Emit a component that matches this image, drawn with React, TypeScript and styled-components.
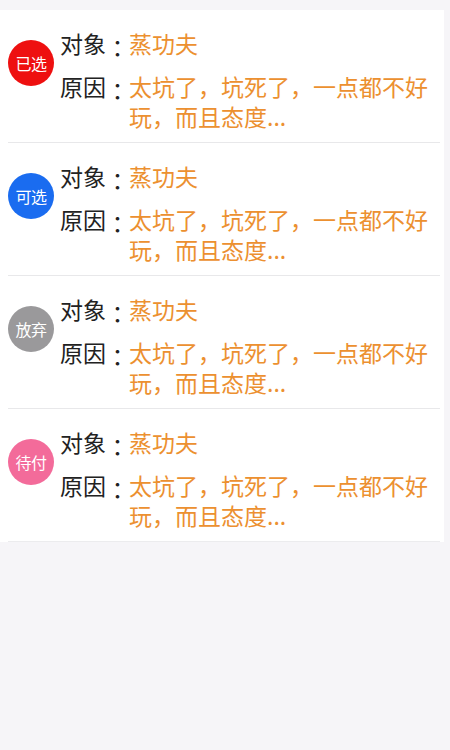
import React from "react";
import styled, { createGlobalStyle } from "styled-components";

const GlobalStyle = createGlobalStyle`
  html, body {
    margin: 0;
    padding: 0;
    background: #f6f5f8;
    font-family: "Noto Sans CJK SC", "Noto Sans", sans-serif;
  }
`;

type Status = { label: string; color: string };

const items: Status[] = [
  { label: "已选", color: "#ee1010" },
  { label: "可选", color: "#1a6cf0" },
  { label: "放弃", color: "#9a999b" },
  { label: "待付", color: "#f36b9a" },
];

const App: React.FC = () => {
  return (
    <>
      <GlobalStyle />
      <Page>
        <List>
          {items.map((s) => (
            <Item key={s.label}>
              <Badge $color={s.color}>{s.label}</Badge>
              <Info>
                <Line>
                  <Label>
                    对象<Colon>：</Colon>
                  </Label>
                  <Value>蒸功夫</Value>
                </Line>
                <Line>
                  <Label>
                    原因<Colon>：</Colon>
                  </Label>
                  <Value>太坑了，坑死了，一点都不好玩，而且态度...</Value>
                </Line>
              </Info>
            </Item>
          ))}
        </List>
      </Page>
    </>
  );
};
export default App;

const Page = styled.div`
  padding-top: 10px;
  min-height: 740px;
`;

const List = styled.div`
  width: 444px;
  background: #fff;
`;

const Item = styled.div`
  display: flex;
  align-items: flex-start;
  margin: 0 4px 0 8px;
  padding: 18px 0 12px;
  height: 102px;
  border-bottom: 1px solid #e8e8ea;
  &:last-child {
    border-bottom-color: #ececee;
  }
`;

const Badge = styled.div<{ $color: string }>`
  flex: none;
  width: 46px;
  height: 46px;
  margin-top: 12px;
  border-radius: 50%;
  background: ${(p) => p.$color};
  color: #fff;
  font-size: 16px;
  line-height: 46px;
  text-align: center;
  letter-spacing: -0.5px;
`;

const Info = styled.div`
  flex: 1;
  display: flex;
  flex-direction: column;
  gap: 13px;
  margin-left: 6px;
  font-size: 23px;
  line-height: 30px;
`;

const Line = styled.div`
  display: flex;
`;

const Label = styled.span`
  flex: none;
  color: #222;
`;

const Colon = styled.span`
  display: inline-block;
  font-family: "Noto Sans CJK JP", sans-serif;
  transform: translateY(4px);
`;

const Value = styled.span`
  flex: 1;
  color: #ec9030;
`;
